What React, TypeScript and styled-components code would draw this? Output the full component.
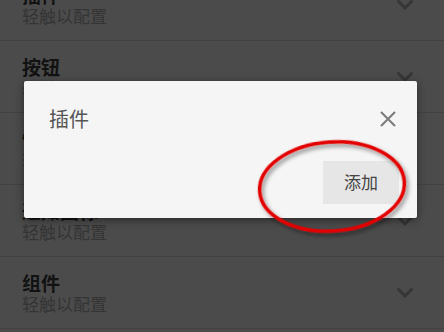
import React from "react";
import styled, { createGlobalStyle } from "styled-components";

const Global = createGlobalStyle`
  html, body { margin: 0; padding: 0; background: #4b4b4b; }
  body { width: 444px; height: 332px; overflow: hidden; font-family: "Noto Sans CJK SC", "Noto Sans", sans-serif; }
`;

const Screen = styled.div`
  position: relative;
  width: 444px;
  height: 332px;
  overflow: hidden;
  background: #4b4b4b;
`;

const List = styled.div`
  display: flex;
  flex-direction: column;
  margin-top: -31px;
`;

const Row = styled.div`
  display: flex;
  align-items: center;
  justify-content: space-between;
  height: 71px;
  padding: 0 31px 0 22px;
  border-bottom: 1px solid #424242;
`;

const Texts = styled.div`
  display: flex;
  flex-direction: column;
`;

const Title = styled.div`
  font-size: 19px;
  line-height: 22px;
  font-weight: 700;
  color: #121212;
`;

const Subtitle = styled.div`
  font-size: 17px;
  line-height: 20px;
  color: #343434;
`;

const Chevron = styled.svg`
  width: 16px;
  height: 10px;
  flex: none;
`;

const Dialog = styled.div`
  position: absolute;
  left: 24px;
  top: 81px;
  width: 393px;
  height: 137px;
  box-sizing: border-box;
  background: #f5f5f5;
  border-radius: 2px;
  box-shadow: 0 2px 8px rgba(0, 0, 0, 0.45);
  display: flex;
  flex-direction: column;
  justify-content: space-between;
  padding: 24px 18px 14px 25px;
`;

const DialogHeader = styled.div`
  display: flex;
  align-items: center;
  justify-content: space-between;
  padding-right: 3px;
`;

const DialogTitle = styled.div`
  font-size: 20px;
  line-height: 28px;
  color: #555555;
`;

const CloseIcon = styled.svg`
  width: 16px;
  height: 16px;
`;

const Actions = styled.div`
  display: flex;
  justify-content: flex-end;
`;

const ActionButton = styled.button`
  border: none;
  border-radius: 0;
  background: #e6e6e6;
  width: 76px;
  height: 43px;
  font-family: "Noto Sans CJK SC", "Noto Sans", sans-serif;
  font-size: 17px;
  color: #444444;
  padding: 0 0 2px 0;
  display: flex;
  align-items: center;
  justify-content: center;
`;

const Annotation = styled.svg`
  position: absolute;
  left: 0;
  top: 0;
  width: 444px;
  height: 332px;
  pointer-events: none;
`;

const rows = [
  { title: "插件", sub: "轻触以配置" },
  { title: "按钮", sub: "轻触以配置" },
  { title: "快捷方式", sub: "轻触以配置" },
  { title: "通知图标", sub: "轻触以配置" },
  { title: "组件", sub: "轻触以配置" },
];

const ChevronDown = () => (
  <Chevron viewBox="0 0 16 10">
    <path d="M1.5 1.5 L8 8 L14.5 1.5" fill="none" stroke="#363636" strokeWidth="3" strokeLinecap="square" />
  </Chevron>
);

export default function App() {
  return (
    <Screen>
      <Global />
      <List>
        {rows.map((r, i) => (
          <Row key={i}>
            <Texts>
              <Title>{r.title}</Title>
              <Subtitle>{r.sub}</Subtitle>
            </Texts>
            <ChevronDown />
          </Row>
        ))}
      </List>
      <Dialog>
        <DialogHeader>
          <DialogTitle>插件</DialogTitle>
          <CloseIcon viewBox="0 0 16 16">
            <path d="M1 1 L15 15 M15 1 L1 15" stroke="#7a7a7a" strokeWidth="2" fill="none" />
          </CloseIcon>
        </DialogHeader>
        <Actions>
          <ActionButton>添加</ActionButton>
        </Actions>
      </Dialog>
      <Annotation viewBox="0 0 444 332">
        <defs>
          <filter id="sh" x="-20%" y="-20%" width="140%" height="140%">
            <feDropShadow dx="2" dy="3" stdDeviation="2" floodColor="#000" floodOpacity="0.45" />
          </filter>
        </defs>
        <ellipse
          cx="332"
          cy="186.5"
          rx="72.5"
          ry="44.5"
          transform="rotate(-4 332 186.5)"
          fill="none"
          stroke="#e30000"
          strokeWidth="3.5"
          filter="url(#sh)"
        />
      </Annotation>
    </Screen>
  );
}
